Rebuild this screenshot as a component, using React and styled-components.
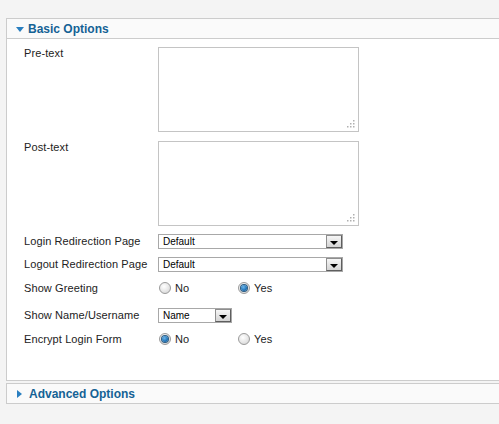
import React from "react";
import styled, { createGlobalStyle } from "styled-components";

const Global = createGlobalStyle`
  html, body { margin: 0; padding: 0; overflow: hidden; }
  body { background: #f4f4f4; font-family: "Liberation Sans", Arial, sans-serif; }
`;

const Page = styled.div`
  padding: 18px 0 0 6px;
`;

const Panel = styled.div`
  border: 1px solid #cccccc;
  border-right: none;
  background: #ffffff;
  & + & { margin-top: 2px; }
`;

const Header = styled.div`
  height: 19px;
  display: flex;
  align-items: center;
  gap: ${(p) => (p.$open ? 4 : 7)}px;
  padding-left: ${(p) => (p.$open ? 9 : 10)}px;
  background: #fafafa;
  border-bottom: ${(p) => (p.$open ? "1px solid #cccccc" : "none")};
  color: #146295;
  font-weight: bold;
  font-size: 12px;
`;

const Arrow = styled.span`
  width: 0;
  height: 0;
  ${(p) =>
    p.$open
      ? `border-left: 4px solid transparent; border-right: 4px solid transparent; border-top: 5px solid #2a7fc0; margin-top: 2px;`
      : `border-top: 4px solid transparent; border-bottom: 4px solid transparent; border-left: 5px solid #2a7fc0;`}
`;

const Body = styled.div`
  height: 341px;
  padding: 8px 0 0 17px;
  display: flex;
  flex-direction: column;
  box-sizing: border-box;
`;

const Row = styled.div`
  display: flex;
  align-items: ${(p) => (p.$top ? "flex-start" : "center")};
  height: ${(p) => p.$h}px;
  margin-top: ${(p) => p.$mt || 0}px;
`;

const Label = styled.div`
  width: 134px;
  flex: none;
  font-size: 11px;
  line-height: 13px;
  letter-spacing: 0.1px;
  color: #222;
`;

const TextArea = styled.div`
  position: relative;
  width: 199px;
  height: 83px;
  border: 1px solid #c4c4c4;
  background: #fff;
`;

const Grip = styled.svg`
  position: absolute;
  right: 3px;
  bottom: 3px;
`;

const Select = styled.div`
  position: relative;
  width: ${(p) => p.$w}px;
  height: 13px;
  border: 1px solid #a8a8a8;
  background: #fff;
  font-size: 10px;
  line-height: 13px;
  padding-left: 4px;
  box-sizing: content-box;
  color: #000;
`;

const SelBtn = styled.div`
  position: absolute;
  top: 0;
  right: 0;
  width: 16px;
  height: 13px;
  border: 1px solid #8e8e8e;
  border-right-color: #5e5e5e;
  border-bottom-color: #5e5e5e;
  box-sizing: border-box;
  background: linear-gradient(#f6f6f6, #d4d4d4);
  display: flex;
  justify-content: center;
  align-items: flex-end;
  padding-bottom: 2px;
  &::after {
    content: "";
    width: 0;
    height: 0;
    border-left: 4px solid transparent;
    border-right: 4px solid transparent;
    border-top: 4px solid #000;
  }
`;

const RadioGroup = styled.div`
  display: flex;
  align-items: center;
`;

const Option = styled.label`
  display: flex;
  align-items: center;
  gap: 4px;
  width: ${(p) => p.$w}px;
  font-size: 11px;
  letter-spacing: 0.1px;
  color: #222;
`;

const Radio = styled.span`
  width: 12px;
  height: 12px;
  border-radius: 50%;
  box-sizing: border-box;
  border: 1px solid #9a9a9a;
  background: radial-gradient(circle at 40% 35%, #ffffff 0%, #e6e6e6 55%, #cfcfcf 100%);
  display: flex;
  align-items: center;
  justify-content: center;
  margin-left: 1px;
  &::after {
    content: "";
    display: ${(p) => (p.$checked ? "block" : "none")};
    width: 6px;
    height: 6px;
    border-radius: 50%;
    background: radial-gradient(circle at 40% 35%, #6fb7ea 0%, #1f73b8 60%, #0d4d85 100%);
    box-shadow: 0 0 0 1px #2a5a80;
  }
`;

const Dots = () => (
  <Grip width="9" height="9" viewBox="0 0 9 9">
    {[[7, 1], [4, 4], [7, 4], [1, 7], [4, 7], [7, 7]].map(([x, y], i) => (
      <rect key={i} x={x} y={y} width="1.5" height="1.5" fill="#b0b0b0" />
    ))}
  </Grip>
);

const RadioRow = ({ label, value, mt }) => (
  <Row $h={16} $mt={mt}>
    <Label>{label}</Label>
    <RadioGroup>
      <Option $w={79}>
        <Radio $checked={value === "No"} />
        No
      </Option>
      <Option $w={60}>
        <Radio $checked={value === "Yes"} />
        Yes
      </Option>
    </RadioGroup>
  </Row>
);

export default function App() {
  return (
    <>
      <Global />
      <Page>
        <Panel>
          <Header $open>
            <Arrow $open />
            Basic Options
          </Header>
          <Body>
            <Row $h={85} $top>
              <Label>Pre-text</Label>
              <TextArea>
                <Dots />
              </TextArea>
            </Row>
            <Row $h={85} $top $mt={9}>
              <Label>Post-text</Label>
              <TextArea>
                <Dots />
              </TextArea>
            </Row>
            <Row $h={15} $mt={8}>
              <Label>Login Redirection Page</Label>
              <Select $w={179}>
                Default
                <SelBtn />
              </Select>
            </Row>
            <Row $h={15} $mt={8}>
              <Label>Logout Redirection Page</Label>
              <Select $w={179}>
                Default
                <SelBtn />
              </Select>
            </Row>
            <RadioRow label="Show Greeting" value="Yes" mt={8} />
            <Row $h={15} $mt={12}>
              <Label>Show Name/Username</Label>
              <Select $w={68}>
                Name
                <SelBtn />
              </Select>
            </Row>
            <RadioRow label="Encrypt Login Form" value="No" mt={8} />
          </Body>
        </Panel>
        <Panel>
          <Header>
            <Arrow />
            Advanced Options
          </Header>
        </Panel>
      </Page>
    </>
  );
}
